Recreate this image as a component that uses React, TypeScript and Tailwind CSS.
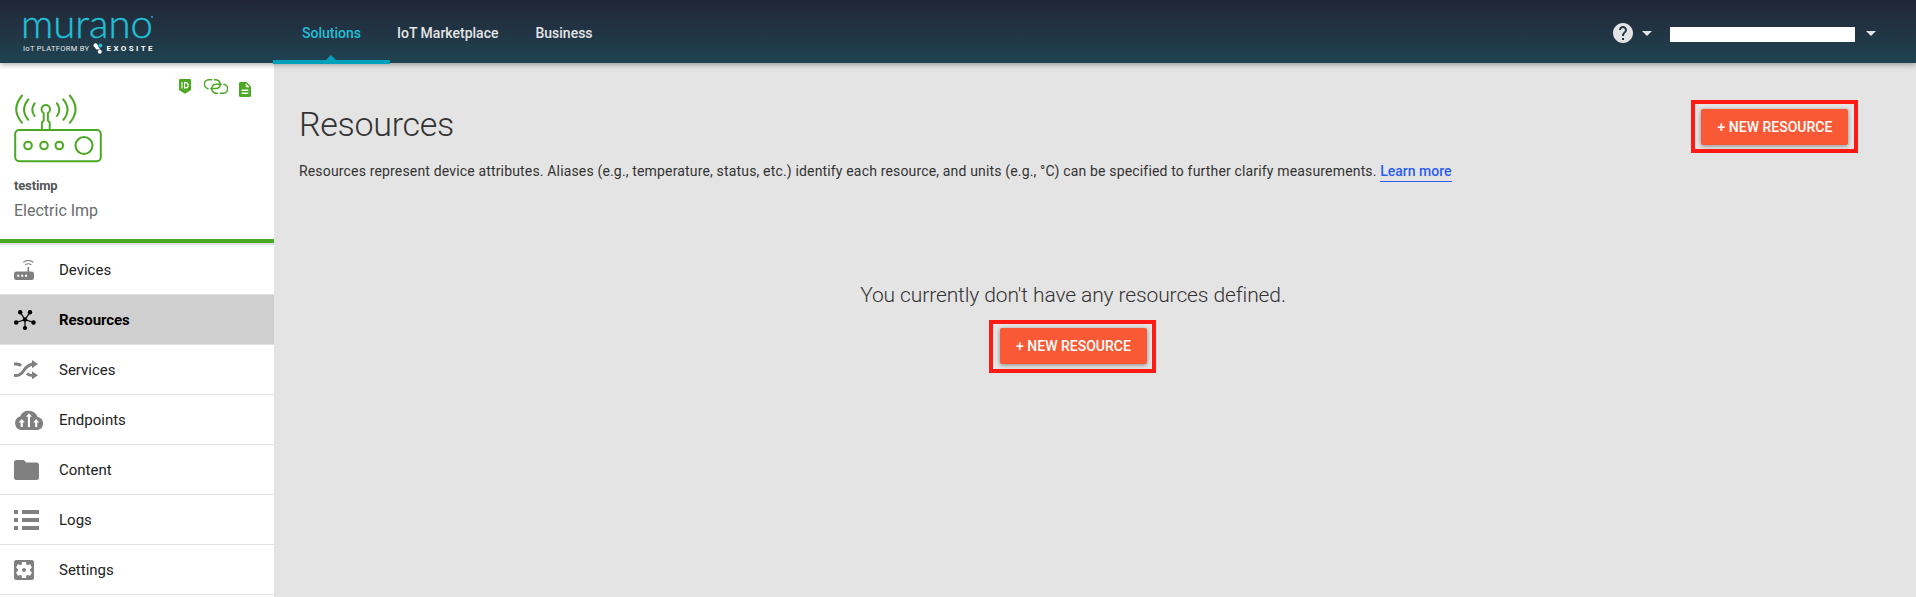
import type { ReactNode } from "react";

function Logo() {
  return (
    <svg width="160" height="63" viewBox="0 0 160 63" overflow="visible" aria-label="murano">
      <text x="21" y="37.500" fontFamily="Lato, sans-serif" fontWeight="300" fontSize="40" textLength="132" lengthAdjust="spacingAndGlyphs" fill="#22bfd6" stroke="#22bfd6" strokeWidth="0.400">
        murano
      </text>
      <circle cx="152" cy="17" r="0.900" fill="#22bfd6" />
      <text x="23" y="51" fontFamily="Roboto, sans-serif" fontWeight="400" fontSize="7.500" textLength="66" fill="#e6ebee">
        IoT PLATFORM BY
      </text>
      <g fill="#fff">
        <circle cx="95.500" cy="45.300" r="2" />
        <circle cx="99.800" cy="51.800" r="2" />
        <path d="M93.700 46.200L96.500 49.500h3.800L96.800 44.400z" />
        <circle cx="100.300" cy="45.400" r="2" fill="#22bfd6" />
      </g>
      <text x="106.500" y="51" fontFamily="Roboto, sans-serif" fontWeight="700" fontSize="8" textLength="46" fill="#fff">
        EXOSITE
      </text>
    </svg>
  );
}

function Caret() {
  return (
    <svg width="10" height="5" viewBox="0 0 10 5">
      <path d="M0 0h10L5 5z" fill="#e4e4e4" />
    </svg>
  );
}

function Header() {
  return (
    <header className="relative z-10 flex h-[63px] shrink-0 bg-linear-to-b from-[#212636] to-[#1e4352] text-sm font-medium text-[#e4e4e4] shadow-[0_1px_6px_rgba(0,0,0,0.4)]">
      <div className="w-[273px]">
        <Logo />
      </div>
      <nav className="flex h-16 grow">
        <a className="relative flex h-16 w-[117px] items-center justify-center border-b-4 border-[#00a0ba] pt-1.5 text-[#22bfd6]">
          Solutions
          <svg className="absolute bottom-0 left-[53px]" width="10" height="5" viewBox="0 0 10 5">
            <path d="M0 5h10L5 0z" fill="#00a0ba" />
          </svg>
        </a>
        <a className="flex items-center pt-0.5 pl-[7px]">IoT Marketplace</a>
        <a className="flex items-center pt-0.5 pl-[37px]">Business</a>
      </nav>
      <div className="flex items-center pr-10">
        <svg className="mt-[3px] mr-[9px]" width="20" height="20" viewBox="2 2 20 20">
          <path
            fill="#e4e4e4"
            d="M12 2C6.48 2 2 6.48 2 12s4.48 10 10 10 10-4.48 10-10S17.52 2 12 2zm1 17h-2v-2h2v2zm2.07-7.75l-.9.92C13.45 12.9 13 13.5 13 15h-2v-.5c0-1.1.45-2.1 1.17-2.83l1.24-1.26c.37-.36.59-.86.59-1.41 0-1.1-.9-2-2-2s-2 .9-2 2H8c0-2.21 1.79-4 4-4s4 1.79 4 4c0 .88-.36 1.68-.93 2.25z"
          />
        </svg>
        <div className="pt-1"><Caret /></div>
        <div className="mt-[6px] mr-[11px] ml-[18px] h-[15px] w-[185px] bg-white" />
        <div className="pt-1"><Caret /></div>
      </div>
    </header>
  );
}

function DeviceArt() {
  return (
    <svg className="mt-[11px] ml-3" width="92" height="72" viewBox="12 92 92 72" fill="none" stroke="#4ba823" strokeWidth="2" strokeLinecap="round">
      <rect x="15.200" y="130" width="85.600" height="31.200" rx="4" />
      <circle cx="28" cy="145.500" r="3.800" />
      <circle cx="44" cy="145.500" r="3.800" />
      <circle cx="59.300" cy="145.500" r="3.800" />
      <circle cx="84" cy="145.500" r="8.500" />
      <path d="M43.700 120.500v-7.400a4.300 4.300 0 1 1 4.200 0v7.400M43.700 120.500l-1.800 2v7M47.900 120.500l1.800 2v7" strokeWidth="1.900" />
      <path d="M22 95.500q-11.500 14 0 27.300M28.300 99.300q-8.500 10.500 0 20.500M34.600 103.400q-4.600 6.500 0 12.600M57 103.400q4.600 6.500 0 12.600M63.300 99.300q8.500 10.500 0 20.500M69.800 95.500q11.500 14 0 27.300" />
    </svg>
  );
}

function StatusIcons() {
  return (
    <div className="flex h-[35px] items-start pt-4 pl-[179px]">
      <svg width="12" height="15" viewBox="0 0 12 15">
        <path d="M1.200 0h9.600Q12 0 12 1.200V11L6 14.800 0 11V1.200Q0 0 1.200 0z" fill="#4ba823" />
        <path d="M3 3v6.500M5.600 3.600v5.300h1.200q2.400 0 2.400-2.600t-2.400-2.700z" fill="none" stroke="#fff" strokeWidth="1.100" />
      </svg>
      <svg className="ml-[13px]" width="24" height="15" viewBox="0 0 24 15" fill="none" stroke="#4ba823" strokeWidth="1.500" strokeLinecap="round">
        <path d="M4 9.700A4.500 4.500 0 0 1 5.200.8h2.600M10.500.8h1.200a4.500 4.500 0 0 1 4.200 6.200Q15.200 9.500 12 9.500H6.800" />
        <path d="M20 5.300a4.500 4.500 0 0 1-1.200 8.900h-2.600M13.500 14.200h-1.200A4.500 4.500 0 0 1 8.100 8q.8-2.700 4-2.700h5.100" />
      </svg>
      <svg className="mt-[3px] ml-[11px]" width="12" height="15" viewBox="4 2 16 20" preserveAspectRatio="none">
        <path fill="#4ba823" d="M14 2H6c-1.1 0-2 .9-2 2v16c0 1.1.9 2 2 2h12c1.1 0 2-.9 2-2V8l-6-6zm2.5 16h-9v-2h9v2zm0-4h-9v-2h9v2zM13 9V3.5L18.5 9H13z" />
      </svg>
    </div>
  );
}

const icons: Record<string, ReactNode> = {
  Devices: (
    <svg width="20" height="20" viewBox="0 0 20 20">
      <path d="M13.500 7h1.600v4.500h2.400Q20 11.500 20 14v3.500Q20 20 17.500 20h-15Q0 20 0 17.500V14q0-2.500 2.500-2.500h11z" fill="#808080" />
      <path d="M3.200 14.700h2v2h-2zM7.200 14.700h2v2h-2zM11 14.700h2v2h-2z" fill="#fff" />
      <path d="M9.300 2.300q5-3.600 10 0M11.200 4.700q3.100-2 6.200 0" fill="none" stroke="#808080" strokeWidth="1.100" />
    </svg>
  ),
  Resources: (
    <svg width="22" height="20" viewBox="0 0 22 20" fill="#000">
      <path d="M11 9.500L6.200 2.300M11 9.500l5-7.200M11 9.500l-8.700 3M11 9.500l8.700 3M11 9.500v8.500" stroke="#000" strokeWidth="1.200" />
      <circle cx="6.200" cy="2.300" r="2.200" />
      <circle cx="16" cy="2.300" r="2.200" />
      <circle cx="2.200" cy="12.500" r="2.200" />
      <circle cx="19.500" cy="12.500" r="2.200" />
      <circle cx="11" cy="18" r="2.100" />
      <circle cx="11" cy="9.500" r="2.200" />
    </svg>
  ),
  Services: (
    <svg width="24" height="19" viewBox="0 0 24 19" fill="none" stroke="#808080" strokeWidth="2.900">
      <path d="M0 15.500h2.500Q7 15.200 9.800 10.500T18.500 4M0 4h2.500q3 .1 4.600 1.800M12.800 13.500q2.200 2 5.700 2" />
      <path d="M18 0l6 4-6 4.200zM18 11.200l6 4.100-6 4z" fill="#808080" stroke="none" />
    </svg>
  ),
  Endpoints: (
    <svg width="30" height="20" viewBox="0 0 30 20">
      <path d="M7 20a7 7 0 0 1-1-13.600 9.500 9.500 0 0 1 17.600.6A6.600 6.600 0 0 1 23.500 20z" fill="#808080" />
      <path d="M15 3.200l3 3.600h-2V17h-2.100V6.800h-2zM7.800 9l2.900 3.500H8.800V17H6.700v-4.500h-2zM22.200 9l3 3.500h-2V17h-2.100v-4.500h-1.900z" fill="#fff" />
    </svg>
  ),
  Content: (
    <svg width="25" height="20" viewBox="0 0 25 20">
      <path d="M2.500 0H10l2 2.500h10.500Q25 2.500 25 5v12.500q0 2.500-2.500 2.500h-20Q0 20 0 17.500v-15Q0 0 2.500 0z" fill="#808080" />
    </svg>
  ),
  Logs: (
    <svg width="25" height="20" viewBox="0 0 25 20">
      <path d="M0 0h4v4H0zM8 0h17v4H8zM0 8h4v4H0zM8 8h17v4H8zM0 16h4v4H0zM8 16h17v4H8z" fill="#808080" />
    </svg>
  ),
  Settings: (
    <svg width="20" height="20" viewBox="3 3 18 18">
      <rect x="3" y="3" width="18" height="18" rx="2" fill="#808080" />
      <path
        transform="translate(12 12) scale(.73) translate(-12 -12)"
        fill="#fff"
        d="M19.430 12.980c.04-.32.070-.64.070-.98s-.03-.66-.07-.98l2.110-1.650c.19-.15.240-.42.120-.64l-2-3.460c-.12-.22-.39-.3-.61-.22l-2.490 1c-.52-.4-1.080-.73-1.690-.98l-.38-2.650C14.460 2.180 14.250 2 14 2h-4c-.25 0-.46.180-.49.420l-.38 2.650c-.61.250-1.170.590-1.690.980l-2.490-1c-.23-.09-.49 0-.61.220l-2 3.460c-.13.220-.07.490.120.640l2.110 1.650c-.04.320-.07.650-.07.980s.03.660.070.980l-2.110 1.650c-.19.150-.24.420-.12.640l2 3.460c.12.220.390.300.610.220l2.490-1c.52.400 1.080.730 1.690.980l.38 2.650c.03.240.240.420.490.420h4c.25 0 .46-.18.490-.42l.38-2.650c.61-.25 1.170-.59 1.690-.98l2.490 1c.23.090.490 0 .61-.22l2-3.460c.12-.22.070-.49-.12-.64l-2.110-1.650zM12 14.500a2.500 2.500 0 1 1 0-5 2.500 2.500 0 0 1 0 5z"
      />
    </svg>
  ),
};

function Sidebar() {
  return (
    <aside className="w-[274px] shrink-0 bg-white">
      <div className="h-[180px] border-b-4 border-[#4ba823]">
        <StatusIcons />
        <div className="-mt-[17px]"><DeviceArt /></div>
        <div className="mt-3 ml-3.5 text-[13px] leading-5 font-bold tracking-[-0.150px] text-[#545658]">testimp</div>
        <div className="mt-[3px] ml-3.5 text-base leading-6 text-[#6a6c6e]">Electric Imp</div>
      </div>
      <div className="h-0.5 bg-[#e0e0e0]" />
      <ul>
        {Object.keys(icons).map((name) => (
          <li
            key={name}
            className={
              name === "Resources"
                ? "flex h-[50px] items-center border-b border-[#e0e0e0] bg-[#cfcfcf] pl-3.5 text-[15px] font-bold tracking-[-0.060px] text-black"
                : "flex h-[50px] items-center border-b border-[#e0e0e0] pl-3.5 text-[15px] text-[#222]"
            }
          >
            <span className="w-[45px]">{icons[name]}</span>
            <span className="pt-0.5">{name}</span>
          </li>
        ))}
      </ul>
    </aside>
  );
}

function NewResourceButton({ className = "pt-0" }: { className?: string }) {
  return (
    <div className={`flex h-[53px] w-[167px] items-center justify-center border-4 border-[#ff1a14] ${className}`}>
      <button className="h-9 w-[147px] rounded-[2px] bg-[#f95a35] pl-px text-sm font-medium text-white shadow-[0_1px_4px_rgba(0,0,0,0.4)]">
        + NEW RESOURCE
      </button>
    </div>
  );
}

export default function App() {
  return (
    <div className="flex h-[597px] w-[1916px] flex-col overflow-hidden bg-[#e4e4e4] font-[Roboto,sans-serif]">
      <Header />
      <div className="flex min-h-0 grow">
        <Sidebar />
        <main className="flex grow flex-col pl-[25px]">
          <div className="flex items-start justify-between pt-[37px] pr-[58px]">
            <h1 className="mt-0.5 text-[34px] leading-[44px] font-light tracking-[-0.300px] text-[#333]">Resources</h1>
            <NewResourceButton />
          </div>
          <p className="mt-[7px] text-sm leading-[22px] tracking-[0.162px] text-[#333]">
            Resources represent device attributes. Aliases (e.g., temperature, status, etc.) identify each resource, and units (e.g., °C) can be specified to further clarify measurements.{" "}
            <a className="border-b border-[#2a5df0] pb-0.5 font-medium tracking-normal text-[#2a5df0]">Learn more</a>
          </p>
          <div className="mt-[99px] flex w-[1547px] flex-col items-center">
            <p className="pl-px text-[21px] leading-7 font-light tracking-[-0.110px] text-[#333]">You currently don't have any resources defined.</p>
            <div className="mt-[11px]"><NewResourceButton className="pb-px pl-px" /></div>
          </div>
        </main>
      </div>
    </div>
  );
}
